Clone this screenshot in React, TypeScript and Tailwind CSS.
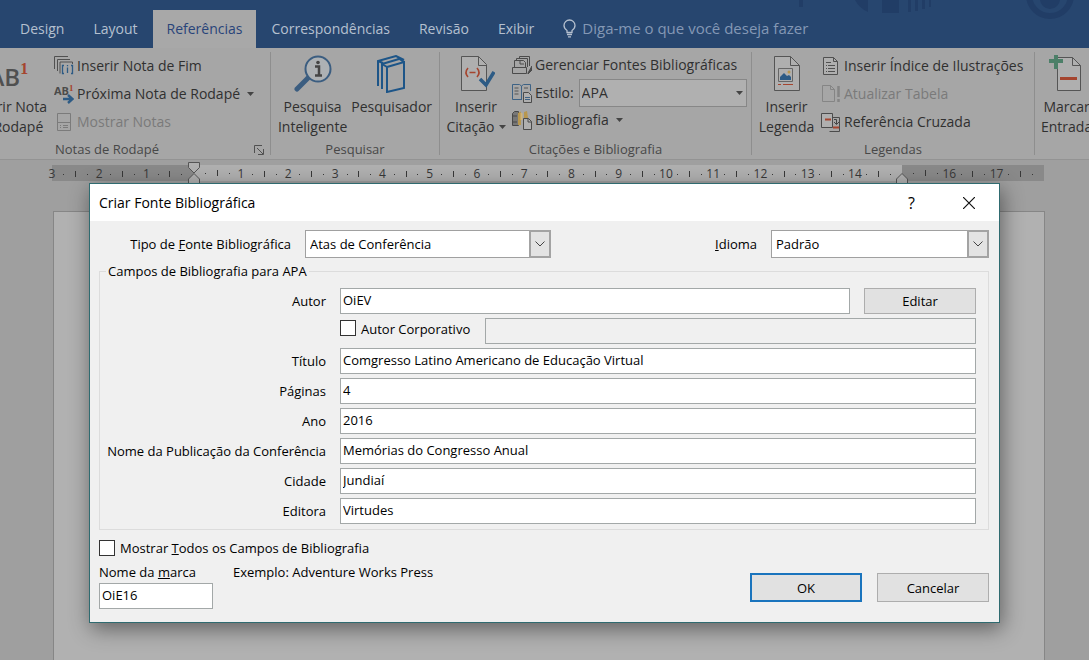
import { useState, type ReactNode } from "react";

const fields = [
  { id: "titulo", label: "Título", value: "Comgresso Latino Americano de Educação Virtual" },
  { id: "paginas", label: "Páginas", value: "4" },
  { id: "ano", label: "Ano", value: "2016" },
  { id: "publicacao", label: "Nome da Publicação da Conferência", value: "Memórias do Congresso Anual" },
  { id: "cidade", label: "Cidade", value: "Jundiaí" },
  { id: "editora", label: "Editora", value: "Virtudes" },
];

const tabs = ["Design", "Layout", "Referências", "Correspondências", "Revisão", "Exibir"];

// 15 sits under the right indent marker, so it has no number
const rulerMarks = ["3", "2", "1", "", "1", "2", "3", "4", "5", "6", "7", "8", "9", "10", "11", "12", "13", "14", "", "16", "17"];

const inputClass = "h-[26px] min-w-0 border border-[#a3a8a8] bg-white px-[2px] pb-[2px] text-black outline-none";
const buttonClass = "w-28 bg-[#e1e1e1] text-center text-black";

const Caret = () => (
  <svg width="7" height="4" viewBox="0 0 7 4" className="shrink-0">
    <path d="M0 0h7L3.5 4z" fill="#444" />
  </svg>
);

const EndnoteIcon = () => (
  <svg width="20" height="20" viewBox="0 0 20 20" fill="none" stroke="#505050">
    <path d="M.5 13V.5H14M3.5 15V3.500H16M6 17.500V6H18.500V8" />
    <path d="M10 9.500H8.500v8H10M17 9.500h1.500v8H17M13.500 11.500v5.500M13.500 9v1.200" stroke="#2d5b85" strokeWidth="1.3" />
  </svg>
);

const NextFootnoteIcon = () => (
  <svg width="20" height="20" viewBox="0 0 20 20">
    <text x="0" y="11" fontSize="11" fontWeight="700" fill="#4b4b4b" fontFamily="Open Sans, sans-serif">AB</text>
    <text x="15" y="7" fontSize="9" fontWeight="700" fill="#a5452f" fontFamily="Liberation Serif, serif">1</text>
    <path d="M9 15h9M14 11l4.500 4-4.500 4" fill="none" stroke="#2d5b85" strokeWidth="2.400" />
  </svg>
);

const ShowNotesIcon = () => (
  <svg width="20" height="20" viewBox="0 0 20 20" fill="none" stroke="#7b7b7b">
    <path d="M3.500 1.500h13v17h-13zM4 10.500h12M6 13.500h1M9 13.500h5M6 15.500h1M9 15.500h5" />
  </svg>
);

const SearchIcon = () => (
  <svg width="38" height="38" viewBox="0 0 38 38" fill="none">
    <path d="M3 34l11-11" stroke="#3b5d80" strokeWidth="5" strokeLinecap="round" />
    <circle cx="24" cy="14" r="12.500" fill="#adb1b4" stroke="#3b5d80" strokeWidth="2" />
    <circle cx="24" cy="7.500" r="1.800" fill="#454545" />
    <path d="M21 11.500h4V20M21 20.500h7" stroke="#454545" strokeWidth="2.500" />
  </svg>
);

const BooksIcon = () => (
  <svg width="32" height="38" viewBox="0 0 32 38" fill="none" stroke="#1d5588" strokeWidth="2">
    <path d="M2 31V6L20 1l8 4M6 34V9l17-5M2 6l5 2" />
    <path d="M11 12l17-5v26l-17 4zM11 12l-5-3M28 7l-6-4" />
  </svg>
);

const CitationIcon = () => (
  <svg width="38" height="38" viewBox="0 0 38 38" fill="none">
    <path d="M4.500 1.500h17l8 8v26h-25z" fill="#afafaf" stroke="#555" />
    <path d="M21.500 1.500v9h8" stroke="#555" />
    <path d="M11 13q-4 4.500 0 9M20 13q4 4.500 0 9M12.500 17.500h6" stroke="#a5452f" strokeWidth="1.600" />
    <path d="M23 24l6 6 8-13" stroke="#2d5b85" strokeWidth="3.500" />
  </svg>
);

const ManageSourcesIcon = () => (
  <svg width="20" height="20" viewBox="0 0 20 20" fill="none" stroke="#4b4b4b">
    <path d="M.500 12.500h14v6H.500zM2.500 12V5.500h9l2 2V12M4.500 5V3.500h11V12M7.500 3V1.500h10V11" />
    <path d="M8 6v3h4" />
    <path d="M16 18l4-7v4l-4 4z" fill="#4b4b4b" />
  </svg>
);

const StyleIcon = () => (
  <svg width="20" height="20" viewBox="0 0 20 20" fill="none">
    <path d="M9.500 16.500H.500v-15h7l2 1.500 2-1.500h7V8M9.500 3v14" stroke="#3d6285" />
    <path d="M2.500 5h4M2.500 8h4M2.500 11h4M12 5h4" stroke="#555" />
    <path d="M11.500 9.500h5l3 3v7h-8z" fill="#afafaf" stroke="#4b4b4b" />
    <path d="M13 14.500h5M13 16.500h5" stroke="#3d6285" />
  </svg>
);

const BibliographyIcon = () => (
  <svg width="20" height="20" viewBox="0 0 20 20" fill="none">
    <path d="M.500 3.500l2-2h4v14h-6zM1 6h4M1 12h4" fill="#777" stroke="#484848" />
    <path d="M6 3l3-1.500V15H6zM12 2l3-1 1 7h-4z" fill="#b8974e" />
    <path d="M9.500 3v7" stroke="#d1b578" strokeWidth="2" />
    <path d="M11.500 8.500h5l3 3v8h-8z" fill="#afafaf" stroke="#4b4b4b" />
    <path d="M16 8.500V12h3.500" stroke="#4b4b4b" />
  </svg>
);

const CaptionIcon = () => (
  <svg width="38" height="38" viewBox="0 0 38 38" fill="none">
    <path d="M6.500 1.500h16l9 9v25h-25z" fill="#afafaf" stroke="#555" />
    <path d="M22.500 1.500v9h9" stroke="#555" />
    <path d="M10.500 13.500h14v13h-14z" stroke="#666" />
    <path d="M12 25v-3l4-4 3 3 2-1 2 2v3z" fill="#2d5b85" />
    <circle cx="21" cy="17" r="1.500" fill="#b8974e" />
    <path d="M10 29.500h3M15 29.500h10" stroke="#a5452f" />
  </svg>
);

const FigureIndexIcon = () => (
  <svg width="20" height="20" viewBox="0 0 20 20" fill="none" stroke="#505050">
    <path d="M2.500 1.500h10l4 4v13h-14z" fill="#afafaf" />
    <path d="M12.500 1.500v4h4M5 6.500h5M5 9.500h1M7 9.500h7M5 12.500h1M7 12.500h7M5 15.500h1M7 15.500h7" />
  </svg>
);

const UpdateTableIcon = () => (
  <svg width="20" height="20" viewBox="0 0 20 20" fill="none" stroke="#858585">
    <path d="M13.500 17.500h-12v-16h8l4 4zM9.500 1.500v4h4" />
    <path d="M17.500 2v11M17.500 15v3" strokeWidth="2.500" />
  </svg>
);

const CrossReferenceIcon = () => (
  <svg width="20" height="20" viewBox="0 0 20 20" fill="none">
    <path d="M10.500 5.500h8v14h-10" stroke="#4b4b4b" />
    <path d="M.500 1.500h11v14H.500z" fill="#afafaf" stroke="#4b4b4b" />
    <path d="M4 7.500h6M12 15.500h6" stroke="#a5452f" strokeWidth="2" />
    <path d="M13 7.500h2.500V12M13 10l2.500 2.500L18 10" stroke="#444" />
  </svg>
);

const MarkEntryIcon = () => (
  <svg width="38" height="38" viewBox="0 0 38 38" fill="none">
    <path d="M9.500 2.500h15l8 8v25h-23z" fill="#afafaf" stroke="#555" />
    <path d="M24.500 2.500v8h8" stroke="#555" />
    <path d="M8 0v14M1 6h14" stroke="#4c7f68" strokeWidth="4" />
    <path d="M12 23.500h17" stroke="#a5452f" strokeWidth="3" />
  </svg>
);

const RibbonGroup = ({ label, className, children }: { label: string; className: string; children: ReactNode }) => (
  <section className={`flex shrink-0 flex-col pt-1 ${className}`}>
    <div className="flex h-[88px]">{children}</div>
    <div className="h-5 text-center text-[13px] leading-5 text-[#484848]">{label}</div>
  </section>
);

const Separator = () => <div className="my-1 w-px shrink-0 bg-[#8e8e8e]" />;

const BigButton = ({ icon, lines, caret }: { icon: ReactNode; lines: string[]; caret?: boolean }) => (
  <button className="flex flex-col items-center whitespace-nowrap text-sm leading-5">
    <span className="flex h-[45px] items-start pt-[3px]">{icon}</span>
    <span>{lines[0]}</span>
    {lines[1] && (
      <span className="flex items-center gap-1">
        {lines[1]}
        {caret && <Caret />}
      </span>
    )}
  </button>
);

const SmallButton = ({ icon, label, caret, disabled }: { icon: ReactNode; label: string; caret?: boolean; disabled?: boolean }) => (
  <button
    disabled={disabled}
    className={`flex h-7 items-center gap-[3px] whitespace-nowrap text-sm ${disabled ? "text-[#7a7a7a]" : ""}`}
  >
    {icon}
    <span>{label}</span>
    {caret && <span className="ml-1"><Caret /></span>}
  </button>
);

const Ribbon = () => (
  <div className="flex h-28 overflow-hidden border-b border-[#939393] bg-[#a6a6a6] text-[#303030]">
    <RibbonGroup label="Notas de Rodapé" className="w-[270px] pr-14">
      <div className="flex w-[47px] shrink-0 justify-end overflow-hidden">
        <BigButton
          icon={
            <span className="flex pt-1 text-2xl leading-9 font-semibold text-[#505050]">
              AB<sup className="top-0 font-['Liberation_Serif',serif] text-base leading-5 text-[#a5452f]">1</sup>
            </span>
          }
          lines={["Inserir Nota", "de Rodapé"]}
        />
      </div>
      <div className="flex flex-col pl-[7px]">
        <SmallButton icon={<EndnoteIcon />} label="Inserir Nota de Fim" />
        <SmallButton icon={<NextFootnoteIcon />} label="Próxima Nota de Rodapé" caret />
        <SmallButton icon={<ShowNotesIcon />} label="Mostrar Notas" disabled />
      </div>
    </RibbonGroup>
    <div className="-ml-4 flex w-4 shrink-0 items-end pb-1">
      <svg width="10" height="10" viewBox="0 0 10 10" fill="none" stroke="#505050">
        <path d="M.500 8V.500H8M3 3l6 6M9.500 4v5.500H4" />
      </svg>
    </div>
    <Separator />
    <RibbonGroup label="Pesquisar" className="w-[168px]">
      <div className="flex w-full justify-center gap-1">
        <BigButton icon={<SearchIcon />} lines={["Pesquisa", "Inteligente"]} />
        <BigButton icon={<BooksIcon />} lines={["Pesquisador"]} />
      </div>
    </RibbonGroup>
    <Separator />
    <RibbonGroup label="Citações e Bibliografia" className="w-[311px]">
      <div className="flex w-[72px] shrink-0 justify-center">
        <BigButton icon={<CitationIcon />} lines={["Inserir", "Citação"]} caret />
      </div>
      <div className="-mt-px flex flex-1 flex-col pr-1">
        <SmallButton icon={<ManageSourcesIcon />} label="Gerenciar Fontes Bibliográficas" />
        <div className="flex h-[27px] items-center gap-[3px] text-sm">
          <StyleIcon />
          <label htmlFor="estilo">Estilo:</label>
          <div className="relative ml-[2px] flex-1">
            <select id="estilo" className="h-7 w-full appearance-none border border-[#878787] bg-[#b0b0b0] px-[2px] outline-none">
              <option>APA</option>
            </select>
            <span className="pointer-events-none absolute inset-y-0 right-1 flex items-center">
              <Caret />
            </span>
          </div>
        </div>
        <SmallButton icon={<BibliographyIcon />} label="Bibliografia" caret />
      </div>
    </RibbonGroup>
    <Separator />
    <RibbonGroup label="Legendas" className="w-[282px]">
      <div className="flex w-[69px] shrink-0 justify-center">
        <BigButton icon={<CaptionIcon />} lines={["Inserir", "Legenda"]} />
      </div>
      <div className="flex flex-col">
        <SmallButton icon={<FigureIndexIcon />} label="Inserir Índice de Ilustrações" />
        <SmallButton icon={<UpdateTableIcon />} label="Atualizar Tabela" disabled />
        <SmallButton icon={<CrossReferenceIcon />} label="Referência Cruzada" />
      </div>
    </RibbonGroup>
    <Separator />
    <RibbonGroup label="" className="pl-[6px]">
      <BigButton icon={<MarkEntryIcon />} lines={["Marcar", "Entrada"]} />
    </RibbonGroup>
  </div>
);

const Ruler = () => (
  <div className="relative mt-[5px] mr-[51px] ml-[46px] h-4">
    <div className="absolute inset-y-0 -right-[6px] left-[6px] flex">
      <div className="flex-[3] bg-[#898989]" />
      <div className="flex-[15] bg-[#b0b0b0]" />
      <div className="flex-[3] bg-[#898989]" />
    </div>
    <div className="relative flex h-full text-xs leading-[18px] text-[#383838]">
      {rulerMarks.map((mark, i) => (
        <div key={i} className="grid min-w-0 flex-1 grid-cols-4 items-center">
          <span className="flex justify-center">
            {i === 3 && (
              <svg width="12" height="22" viewBox="0 0 12 22" className="-my-[3px] shrink-0" fill="#b0b0b0" stroke="#555">
                <path d="M.500 .500h11v5L6 11 .500 5.500zM6 11.500l5.500 5.500v5H.500v-5z" />
              </svg>
            )}
            {i === 18 && (
              <svg width="12" height="22" viewBox="0 0 12 22" className="-my-[3px] shrink-0" fill="#b0b0b0" stroke="#555">
                <path d="M6 11.500l5.500 5.500v5H.500v-5z" />
              </svg>
            )}
            {mark}
          </span>
          <span className="mx-auto h-px w-px bg-[#383838]" />
          <span className="mx-auto h-[6px] w-px bg-[#383838]" />
          <span className="mx-auto h-px w-px bg-[#383838]" />
        </div>
      ))}
    </div>
  </div>
);

const DialogSelect = ({ id, value, className }: { id: string; value: string; className: string }) => (
  <div className={`relative ${className}`}>
    <select id={id} className="h-7 w-full appearance-none border border-[#a0a0a0] bg-white px-1 text-black outline-none">
      <option>{value}</option>
    </select>
    <span className="pointer-events-none absolute inset-y-0 right-0 flex w-[22px] items-center justify-center border-2 border-[#a3a3a3] bg-[#e3e3e3]">
      <svg width="10" height="6" viewBox="0 0 10 6" fill="none" stroke="#444">
        <path d="M.500 .500L5 5 9.500 .500" />
      </svg>
    </span>
  </div>
);

const SourceDialog = () => {
  const [corporate, setCorporate] = useState(false);
  const [showAll, setShowAll] = useState(false);

  return (
    <div
      role="dialog"
      aria-labelledby="dialog-title"
      className="w-full max-w-[911px] border border-[#2f6b70] bg-[#f0f0f0] text-[13px] leading-[18px] text-black shadow-[2px_6px_20px_rgba(0,0,0,0.45)]"
    >
      <header className="flex h-[37px] items-center bg-white pr-6 pl-[9px]">
        <h1 id="dialog-title" className="flex-1 text-sm">Criar Fonte Bibliográfica</h1>
        <button className="mr-12 text-base leading-5">?</button>
        <button aria-label="Fechar">
          <svg width="12" height="12" viewBox="0 0 12 12" stroke="#111" strokeWidth="1.200">
            <path d="M0 0l12 12M12 0L0 12" />
          </svg>
        </button>
      </header>
      <form className="pt-[9px] pr-[10px] pb-[13px] pl-[9px]" onSubmit={(e) => e.preventDefault()}>
        <div className="flex items-center">
          <label htmlFor="tipo" className="w-48 text-right"><span>Tipo de <u>F</u>onte Bibliográfica</span></label>
          <DialogSelect id="tipo" value="Atas de Conferência" className="ml-[14px] w-[246px]" />
          <label htmlFor="idioma" className="ml-auto"><u>I</u>dioma</label>
          <DialogSelect id="idioma" value="Padrão" className="ml-[14px] w-[218px]" />
        </div>

        <fieldset className="mt-1 border border-[#dcdcdc] pr-3 pb-[5px]">
          <legend className="ml-[6px] px-[2px]">Campos de Bibliografia para APA</legend>
          <div className="flex flex-col gap-1 pt-2">
            <div className="flex items-center">
              <label htmlFor="autor" className="w-[226px] shrink-0 text-right">Autor</label>
              <input id="autor" defaultValue="OiEV" className={`ml-[14px] flex-1 ${inputClass}`} />
              <button type="button" className={`ml-[14px] h-[26px] border border-[#adadad] ${buttonClass}`}>Editar</button>
            </div>
            <div className="flex items-start pl-60">
              <input
                id="corporativo"
                type="checkbox"
                checked={corporate}
                onChange={(e) => setCorporate(e.target.checked)}
                className="mt-[2px] size-4 appearance-none border border-[#333] bg-white checked:bg-[#333]"
              />
              <label htmlFor="corporativo" className="w-[129px] pt-[2px] pl-[5px]">Autor Corporativo</label>
              <input aria-label="Autor Corporativo" disabled={!corporate} className={`flex-1 disabled:bg-[#f0f0f0] ${inputClass}`} />
            </div>
            {fields.map((field) => (
              <div key={field.id} className="flex items-center">
                <label htmlFor={field.id} className="w-[226px] shrink-0 text-right">{field.label}</label>
                <input id={field.id} defaultValue={field.value} className={`ml-[14px] flex-1 ${inputClass}`} />
              </div>
            ))}
          </div>
        </fieldset>

        <div className="mt-[9px] flex items-end">
          <div className="flex flex-col">
            <div className="flex items-center">
              <input
                id="todos"
                type="checkbox"
                checked={showAll}
                onChange={(e) => setShowAll(e.target.checked)}
                className="size-4 appearance-none border border-[#333] bg-white checked:bg-[#333]"
              />
              <label htmlFor="todos" className="pl-[5px]">Mostrar <u>T</u>odos os Campos de Bibliografia</label>
            </div>
            <div className="mt-[6px] flex">
              <label htmlFor="marca" className="w-[134px]">Nome da <u>m</u>arca</label>
              <span>Exemplo: Adventure Works Press</span>
            </div>
            <input id="marca" defaultValue="OiE16" className={`mt-[2px] w-[114px] ${inputClass}`} />
          </div>
          <div className="mb-[7px] ml-auto flex gap-[15px]">
            <button type="submit" className={`h-[29px] border-2 border-[#1a74bd] ${buttonClass}`}>OK</button>
            <button type="button" className={`h-[29px] border border-[#adadad] ${buttonClass}`}>Cancelar</button>
          </div>
        </div>
      </form>
    </div>
  );
};

const App = () => (
  <div className="relative flex min-h-screen flex-col overflow-hidden bg-[#9f9f9f] font-['Open_Sans',sans-serif]">
    <nav className="relative flex h-12 shrink-0 items-end gap-px overflow-hidden bg-[#27466f] pl-[6px] text-sm text-[#b5c0cf]">
      <svg width="300" height="20" viewBox="0 0 300 20" className="absolute top-0 right-0" fill="#213d66">
        <path d="M10 0h4v7h-4zM66 0h13v12q-9-4-13-12zM93 0h17v13H93zM119 0h3v12h-3zM126 0h3v11h-3zM133 0h3v9h-3zM140 0h2v7h-2z" />
        <circle cx="261" cy="-5" r="21" fill="none" stroke="#213d66" strokeWidth="6" />
        <circle cx="261" cy="-1" r="10" />
      </svg>
      {tabs.map((tab) => (
        <a
          key={tab}
          href="#"
          className={`flex h-[38px] items-center px-[14px] pb-px ${tab === "Referências" ? "bg-[#a8a8a8] text-[#28447a]" : ""}`}
        >
          {tab}
        </a>
      ))}
      <button className="ml-[14px] flex h-[38px] items-center gap-[6px] pb-px text-[15px] text-[#8498b5]">
        <svg width="13" height="19" viewBox="0 0 13 19" fill="none" stroke="#b5c0cf" strokeWidth="1.300">
          <path d="M4 13.500v-2Q1 9.500 1 6.500a5.500 5.500 0 0 1 11 0q0 3-3 5v2zM4 15.500h5M5 17.800h3" />
        </svg>
        Diga-me o que você deseja fazer
      </button>
    </nav>
    <Ribbon />
    <Ruler />
    <main className="mt-[30px] mr-11 ml-[53px] flex-1 border border-b-0 border-[#868686] bg-[#b1b1b1]" />
    <div className="absolute inset-x-0 top-[183px] flex justify-center">
      <SourceDialog />
    </div>
  </div>
);

export default App;
